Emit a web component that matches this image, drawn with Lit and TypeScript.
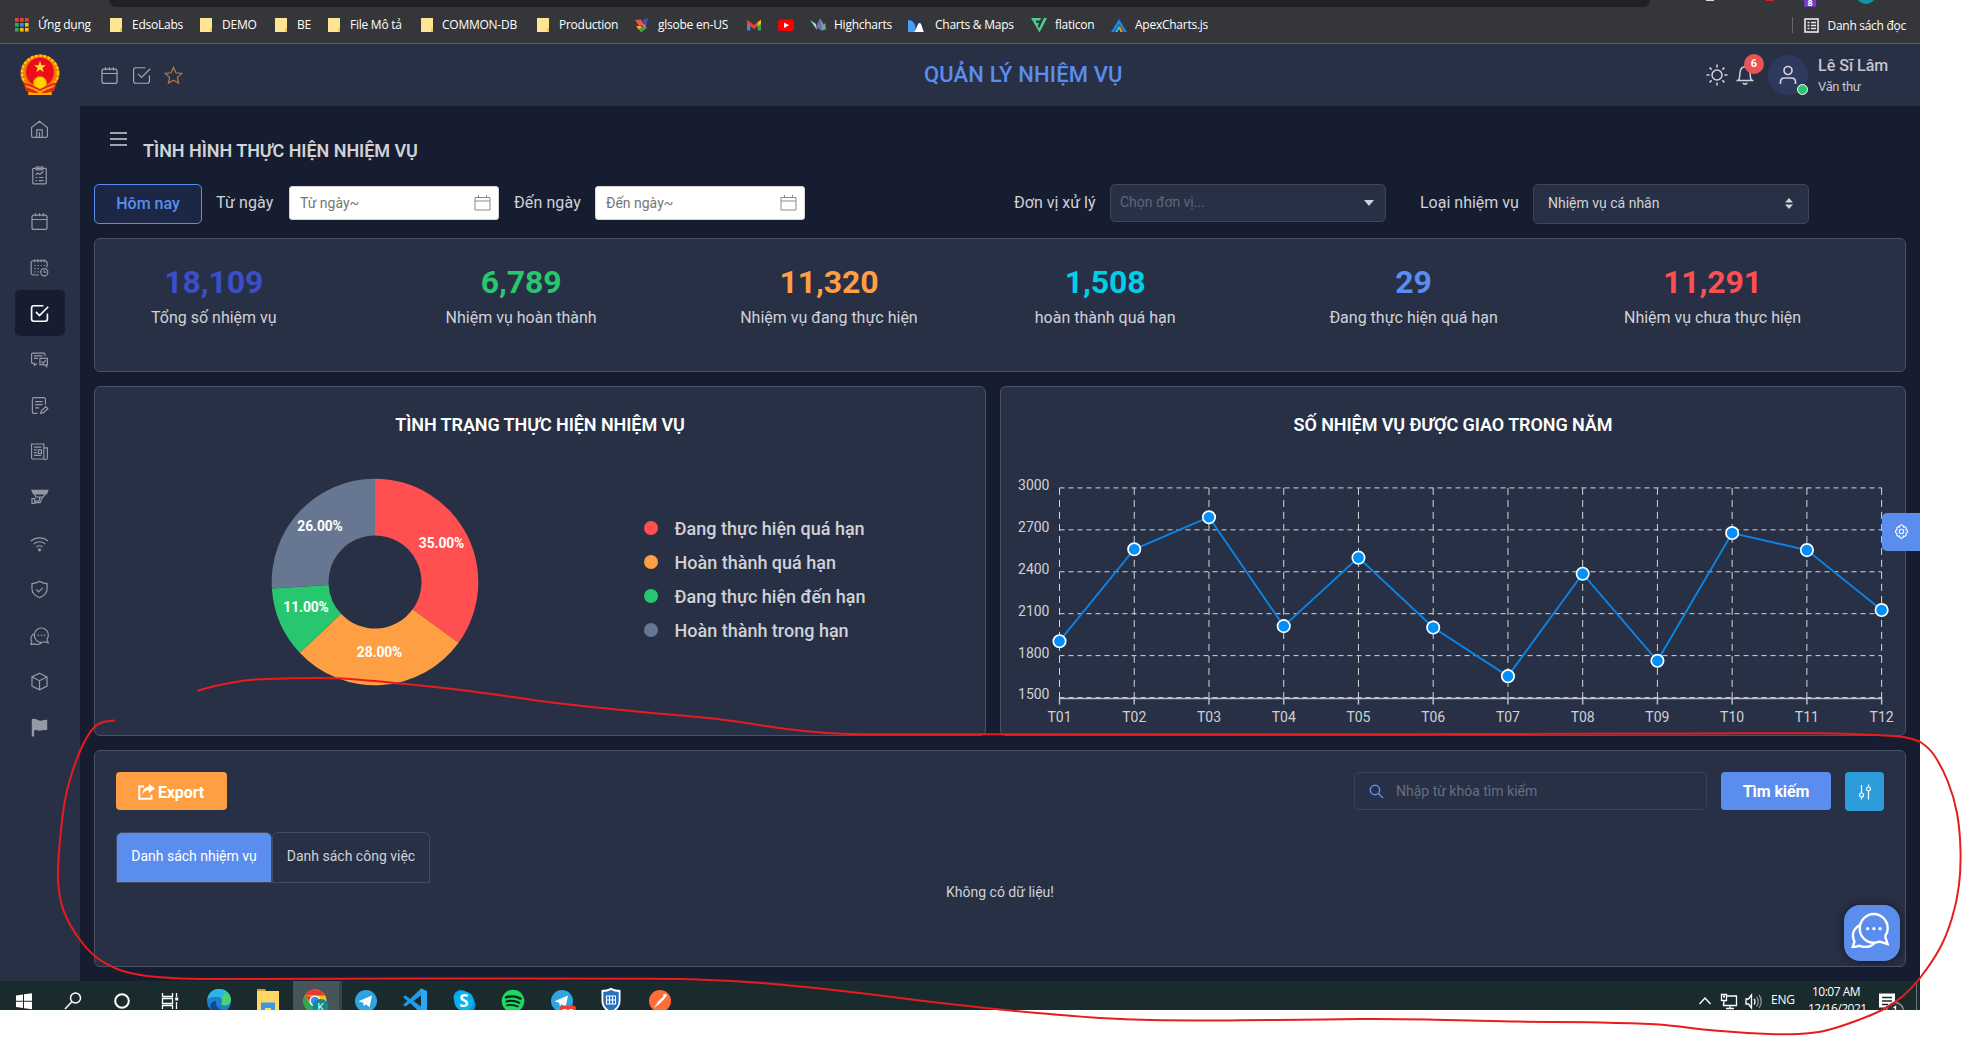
import { LitElement, html, css, svg, nothing, SVGTemplateResult } from "lit";
import { customElement } from "lit/decorators.js";
import { classMap } from "lit/directives/class-map.js";

type Glyph = SVGTemplateResult;

/* ---------- shared line icons on a 24 unit grid ---------- */
const calendar = svg`<rect x="2.5" y="4" width="19" height="18" rx="2.5"/><path d="M2.5 9.5h19M7 1.5v4M12 1.5v4M17 1.5v4"/>`;
const checkBox = svg`<path d="M22 12v7a2.8 2.8 0 0 1-2.800 2.800H4.800A2.800 2.800 0 0 1 2 19V5a2.800 2.800 0 0 1 2.800-2.800H17M7.500 10l4.500 4.500L23 3.500"/>`;
const star = svg`<path d="M12 1.800l3 6.800 7.400.8-5.500 5 1.500 7.300L12 18l-6.400 3.700 1.500-7.300-5.500-5 7.400-.8z"/>`;
const chat = svg`<path d="M21.500 16.500c1-1.300 1.700-3 1.700-4.800 0-5-3.900-9.200-8.800-9.200s-8.900 4.200-8.900 9.200 4 9 8.900 9c1.300 0 2.600-.3 3.700-.8l5 1.600-1.600-5"/><path d="M5.600 9.500C3 10.900 1.200 13.400 1.200 16.200c0 1.300.4 2.600 1 3.700L1 23.600l4.400-1c1.200.6 2.500.8 3.900.8 2.200 0 4-.9 5.400-2.300"/><path d="M10.500 11.800h.1M14.400 11.800h.1M18.300 11.800h.1" stroke-linecap="round" stroke-width="2"/>`;

const menu: { id: string; glyph: Glyph }[] = [
  { id: "home", glyph: svg`<path d="M2 9.500L12 1.500l10 8V20a2 2 0 0 1-2 2H4a2 2 0 0 1-2-2zM8.500 22V12.500h7V22M12 15v7"/>` },
  { id: "report", glyph: svg`<rect x="3.500" y="3" width="17" height="19.500" rx="1"/><rect x="8" y="1.200" width="8" height="3.600"/><path d="M7 11l3-2 2.500 1.500L17 7M7 14.500h2M7 18.500h2M11 14.500h6M11 18.500h6"/>` },
  { id: "calendar", glyph: calendar },
  { id: "schedule", glyph: svg`<path d="M11 21.500H4A2.500 2.500 0 0 1 1.500 19V6A2.500 2.500 0 0 1 4 3.500h15A2.500 2.500 0 0 1 21.500 6v6M6 1.500v4M10 1.500v4M14 1.500v4M18 1.500v4"/><circle cx="18" cy="18" r="4.500"/><path d="M18 15.500V18h2.500M5.500 9.500h1.500M9.500 9.500H11M13.500 9.500H15M5.500 13.500h1.500M9.500 13.500H11M5.500 17.500h1.500M9.500 17.500H11M17.500 9.500H19"/>` },
  { id: "tasks", glyph: checkBox },
  { id: "discussion", glyph: svg`<path d="M9 17l-3.500 2.500V17H3.500A1.500 1.500 0 0 1 2 15.500v-10A1.500 1.500 0 0 1 3.500 4h14A1.500 1.500 0 0 1 19 5.500V8M5 7.500h11M5 10.500h5"/><path d="M12.500 10.500h9.500v8h-1v2.500l-3-2.500h-5.500zM14.500 14.500l2 2 3.500-3.500"/>` },
  { id: "note", glyph: svg`<path d="M9.500 22H5a2 2 0 0 1-2-2V4a2 2 0 0 1 2-2h12.500a2 2 0 0 1 2 2v7M6.500 7h9.500M6.500 11h9.500M6.500 15h5M13.500 22l1-3.500 5.500-5 2.500 2.500-5.500 5z"/>` },
  { id: "news", glyph: svg`<path d="M2 2.500h15.500v19H3.500A1.500 1.500 0 0 1 2 20zM17.500 7.500H22v12.500a1.500 1.500 0 0 1-4.500 0M5 6.500h9.500M5 10h3.500M5 13.500h3.500M5 17h9.500M10.500 10h4v4.500h-4z"/>` },
  { id: "camera", glyph: svg`<path d="M2.500 3h20l-1.500 4.500H4.500zM6 7.500l1.500 4h9l3-4M12.500 11.500l-1 5H6.500M2.500 13.500v6h3.500v-6zM15.500 11.500l-2.500 7H6.500"/><path d="M4 4h17l-1 2.500H5z" fill="currentColor"/>` },
  { id: "wifi", glyph: svg`<path d="M1 9C7.500 3.500 16.500 3.500 23 9M4.500 12.800c4.500-3.900 10.500-3.900 15 0M8.200 16.500c2.300-2 5.300-2 7.600 0"/><circle cx="12" cy="20" r="1.200" fill="currentColor"/>` },
  { id: "shield", glyph: svg`<path d="M12 1.500c3 2 6 2.800 9.500 3v7C21.500 17 17 20.500 12 22.500 7 20.500 2.500 17 2.500 11.500v-7c3.500-.2 6.500-1 9.500-3zM8 12l3 3 5-5"/>` },
  { id: "chat", glyph: chat },
  { id: "box", glyph: svg`<path d="M12 1.500l9.500 4.700v11.600L12 22.500l-9.500-4.700V6.200zM2.500 6.200L12 11l9.500-4.800M12 11v11.500"/>` },
  { id: "flag", glyph: svg`<path d="M3 22.500V2c4-1.500 7 2.500 10.500 2.200 3-.2 5-1.500 7.500-1.200v11.500c-4.500-.8-7 1.500-10.500.5-2.500-.8-4.500-.5-6 .2v7.300z" fill="currentColor"/>` },
];

/* ---------- bookmark bar ---------- */
const folder = svg`<path d="M0 0h12v13h-1v1H0z" fill="#ffe591"/><path d="M10 10h2v4h-2z" fill="#f3c94c"/>`;
const bookmarks: { text?: string; width: number; pad: number; glyph: Glyph }[] = [
  { text: "Ứng dụng", width: 95, pad: 23, glyph: svg`${[0, 5, 10].map((y, r) => [0, 5, 10].map((x, c) => svg`<rect x=${x} y=${y} width="3.600" height="3.600" fill=${["#ea4335", "#ea4335", "#ea4335", "#34a853", "#4285f4", "#fbbc04", "#34a853", "#fbbc04", "#fbbc04"][r * 3 + c]}/>`))}` },
  { text: "EdsoLabs", width: 90, pad: 22, glyph: folder },
  { text: "DEMO", width: 75, pad: 22, glyph: folder },
  { text: "BE", width: 53, pad: 22, glyph: folder },
  { text: "File Mô tả", width: 93, pad: 22, glyph: folder },
  { text: "COMMON-DB", width: 116, pad: 21, glyph: folder },
  { text: "Production", width: 98, pad: 22, glyph: folder },
  { text: "glsobe en-US", width: 112, pad: 23, glyph: svg`<path d="M0 2l6-.5L9 7 4 8z" fill="#e2574c"/><path d="M8 2l5-2.500-1.500 7.500-3 .5z" fill="#3f51b5"/><path d="M1 8l5 0 2 3-4 1z" fill="#f6a623"/><path d="M4 11l7-3 1 2-6 4.500z" fill="#43a047"/><path d="M6 6l5 1-2 3z" fill="#ff7043"/>` },
  { width: 31, pad: 0, glyph: svg`<path d="M0 2.500v10h3.300V6.800z" fill="#4285f4"/><path d="M14 2.500v10h-3.300V6.800z" fill="#34a853"/><path d="M0 1.800L7 7l7-5.200v4L7 11 0 5.800z" fill="#ea4335"/><path d="M10.700 4.300L14 1.800v4l-3.300 2.500z" fill="#fbbc04"/>` },
  { width: 32, pad: 0, glyph: svg`<rect y="1.500" width="16" height="11.500" rx="3" fill="#f00"/><path d="M6 4.500v5.500l5-2.700z" fill="#fff"/>` },
  { text: "Highcharts", width: 98, pad: 24, glyph: svg`<path d="M0 2l6 4 1 6z" fill="#90e9b6"/><path d="M10 0l2 13-6-4z" fill="#6d6fa8"/><path d="M10 0l5.500 10-3.500 3z" fill="#8c8fc4"/><path d="M15 5l1 7-5-2z" fill="#5fb88c"/>` },
  { text: "Charts & Maps", width: 123, pad: 27, glyph: svg`<rect width="16" height="14" fill="#2c3650"/><path d="M0 2c6 0 8 5 8 12H0z" fill="#4a9df0"/><path d="M6 14C9 12 9 5 11.500 5S14 11 16 14z" fill="#fff"/>` },
  { text: "flaticon", width: 80, pad: 24, glyph: svg`<path d="M0 0h10L9 2.500H4.500L5.500 5H8L7 7.500h-.5L8 10.500 13 0h3L8.500 14.500z" fill="#4ad295"/>` },
  { text: "ApexCharts.js", width: 100, pad: 24, glyph: svg`<path d="M8 1L0 14h3l5-8 5 8h3z" fill="#1e88e5"/><path d="M8 7l-4 7h2.500L8 11z" fill="#26c6da"/><path d="M8.500 7.500L12 14H9.500L8 11z" fill="#ff9800"/>` },
];

/* ---------- statistics ---------- */
const stats = [
  { value: "18,109", label: "Tổng số nhiệm vụ", tone: "indigo" },
  { value: "6,789", label: "Nhiệm vụ hoàn thành", tone: "green" },
  { value: "11,320", label: "Nhiệm vụ đang thực hiện", tone: "orange" },
  { value: "1,508", label: "hoàn thành quá hạn", tone: "cyan" },
  { value: "29", label: "Đang thực hiện quá hạn", tone: "blue" },
  { value: "11,291", label: "Nhiệm vụ chưa thực hiện", tone: "red" },
];

const slices = [
  { share: 35, color: "#ff4f50", label: "Đang thực hiện quá hạn", x: 66.500, y: -39.500 },
  { share: 28, color: "#ff9f43", label: "Hoàn thành quá hạn", x: 4.500, y: 69.500 },
  { share: 11, color: "#28c76f", label: "Đang thực hiện đến hạn", x: -69, y: 24.500 },
  { share: 26, color: "#677792", label: "Hoàn thành trong hạn", x: -55, y: -56.500 },
];

/* ---------- monthly series ---------- */
const months = [1903, 2561, 2790, 2011, 2501, 2001, 1653, 2386, 1763, 2677, 2555, 2126];
const plot = { left: 1059.500, step: 74.740, top: 487.900, row: 41.930, right: 1881.700 };
const px = (i: number) => plot.left + plot.step * i;
const py = (v: number) => plot.top + ((3000 - v) / 300) * plot.row;

/* ---------- taskbar ---------- */
const telegram = svg`<circle cx="14" cy="14" r="11" fill="#2ca5e0"/><path d="M6.500 14.200L20 8.500l-2.400 11.700-3.800-2.900-2 2-.6-3.500z" fill="#fff"/>`;
const tasks: { glyph: Glyph; active?: boolean }[] = [
  { glyph: svg`<path d="M6 8.500l7-1v6.300H6zM14 7.300l8-1.100v7.600h-8zM6 14.700h7V21l-7-1zM14 14.700h8v7.600l-8-1.100z" fill="#fff"/>` },
  { glyph: svg`<g fill="none" stroke="#fff" stroke-width="1.500"><circle cx="16.500" cy="11" r="5"/><path d="M12.800 14.800L6 22"/></g>` },
  { glyph: svg`<circle cx="14" cy="14" r="6.800" fill="none" stroke="#fff" stroke-width="2"/>` },
  { glyph: svg`<g fill="none" stroke="#fff" stroke-width="1.300"><path d="M6.500 6v3.500h10V6M6.500 22v-3.500h10V22M6.500 11.500h10v5h-10zM20.500 6v4M20.500 15v7"/></g><path d="M19.200 10.500h3v3h-3z" fill="#fff"/>` },
  { glyph: svg`<circle cx="14" cy="14" r="12" fill="#1b7fd0"/><path d="M2.500 12C4 5 9 2 14 2c7 0 12 5 12 10.500 0 4-3 6-6 6s-4.500-1.500-3.500-3c1.500-2.500 0-6-4-6-5 0-8 1-10 2.500z" fill="#4bd07a"/><path d="M2.500 12C4 5 9 2 14 2c3 0 6 1 8 3-3 1-4 3-5.500 6.500-3-3-9-3.500-14 .5z" fill="#2bb6e8"/><path d="M11 14c-1 6 4 10.500 11 9-4 4-12 4-16-1-2-4 1-8 5-8z" fill="#0c4a94"/>` },
  { glyph: svg`<path d="M3 2h8l1.500 2.500H3z" fill="#d99a1c"/><path d="M3 4h22v22H3z" fill="#fdd663"/><path d="M7 26V15.500h14V26h-4v-5h-6v5z" fill="#3b97e3"/>` },
  { active: true, glyph: svg`<circle cx="14" cy="14" r="11.500" fill="#fbc116"/><path d="M4 8.200A11.500 11.500 0 0 1 24 8.500H14z" fill="#e33b2e"/><path d="M4 8.200A11.500 11.500 0 0 0 13 25.400l4-7.400-8.500-1.500z" fill="#2da94f"/><path d="M4 8.200L9.500 17l2-7z" fill="#e33b2e"/><circle cx="14" cy="14" r="5.600" fill="#fff"/><circle cx="14" cy="14" r="4.200" fill="#4285f4"/><circle cx="19.500" cy="20" r="8" fill="#0f8a90"/><text x="19.500" y="24" text-anchor="middle" class="mini">K</text>` },
  { glyph: telegram },
  { glyph: svg`<path d="M20 1.500l6 2.700v19.600l-6 2.700L9 16l-4.500 3.500-2.500-1.500L6.500 14 2 10l2.500-1.500L9 12z" fill="#1f9cf0"/><path d="M20 8.500L12.500 14l7.500 5.500z" fill="#1a2a2d"/><path d="M20 1.500l6 2.700v19.600l-6 2.700z" fill="#2aaaf5"/>` },
  { glyph: svg`<circle cx="11" cy="10.500" r="7.500" fill="#0aa5e6"/><circle cx="17.500" cy="18" r="8" fill="#0a8fd6"/><circle cx="14" cy="14" r="9.800" fill="#0ab0f0"/><text x="14" y="20" text-anchor="middle" class="skype">S</text>` },
  { glyph: svg`<circle cx="14" cy="14" r="11.300" fill="#1ed760"/><g fill="none" stroke="#12211a" stroke-linecap="round"><path d="M7 10.300c5-1.500 10.500-1 14.500 1.300" stroke-width="2.400"/><path d="M7.500 14.500c4.500-1.300 9-.8 12.800 1.300" stroke-width="2"/><path d="M8 18.300c4-1 7.500-.6 10.800 1.200" stroke-width="1.700"/></g>` },
  { glyph: svg`${telegram}<rect x="12" y="18.500" width="16" height="14" rx="3" fill="#f23c34"/><text x="20" y="30" text-anchor="middle" class="mini">32</text>` },
  { glyph: svg`<path d="M14 .8c3 1.700 6 2.200 9.500 2.200v11c0 6-4.500 10-9.500 12.500C9 24 4.500 20 4.500 14V3C8 3 11 2.500 14 .8z" fill="#fff"/><path d="M14 3c2.500 1.300 5 1.800 7.700 1.900V14c0 5-3.700 8.300-7.700 10.500C10 22.300 6.300 19 6.300 14V4.900C9 4.800 11.500 4.300 14 3z" fill="#2472c0"/><g stroke="#fff" stroke-width="1.100" fill="none"><path d="M9.500 9h9v8h-9zM9.500 13h9M12.500 9v8M15.500 9v8"/></g>` },
  { glyph: svg`<circle cx="14" cy="14" r="11" fill="#ff6c37"/><path d="M8 21l4.500-7 5.500-5 1.500 1.500-5 5.500z" fill="#fff"/><circle cx="19" cy="8.500" r="1.800" fill="#fff"/>` },
];

/* ---------- freehand annotation ---------- */
type Pt = [number, number];
const strokeA: Pt[] = [[198, 690.700], [215, 686], [249, 680], [290, 678.300], [336, 678.300], [400, 683.500], [465, 690.500], [556, 703], [639, 711.700], [717, 719], [791, 729.500], [837, 733.500], [900, 734.200], [1100, 734.200], [1400, 734.200], [1700, 733.500], [1819, 733.300], [1857, 734.200], [1890, 735.800], [1908, 738], [1921, 742.500], [1934, 755], [1948, 782], [1957, 813], [1960.500, 850], [1959, 885], [1952, 918], [1940, 948], [1920, 978], [1903, 996], [1882, 1010], [1853, 1022], [1824, 1031], [1798, 1034], [1769, 1034], [1714, 1030.500], [1659, 1024.500], [1600, 1022.500], [1511, 1021.500], [1427, 1019.500], [1370, 1019], [1300, 1019.800], [1230, 1020.400], [1150, 1020], [1100, 1018], [1050, 1014], [1000, 1009.500], [950, 1004], [900, 998], [850, 992], [800, 986.500], [740, 981.500], [680, 979], [640, 978.700], [419, 978.600], [200, 979], [160, 977.300], [135, 974], [116, 968.500], [96, 957], [82, 942.500], [70, 924.500], [62, 906], [58.300, 885], [58.500, 860], [61, 830], [65, 800], [71, 776], [80, 751], [88, 735.500], [95, 726.500], [103, 722], [114, 720.600]];

function smooth(points: Pt[]): string {
  let d = `M${points[0][0]} ${points[0][1]}`;
  for (let i = 0; i < points.length - 1; i++) {
    const [a, b, c, e] = [points[i - 1] ?? points[i], points[i], points[i + 1], points[i + 2] ?? points[i + 1]];
    const len = Math.hypot(c[0] - b[0], c[1] - b[1]);
    const unit = (p: Pt, q: Pt): Pt => {
      const l = Math.hypot(q[0] - p[0], q[1] - p[1]) || 1;
      return [((q[0] - p[0]) / l) * len / 3, ((q[1] - p[1]) / l) * len / 3];
    };
    const t1 = unit(a, c);
    const t2 = unit(b, e);
    d += `C${b[0] + t1[0]} ${b[1] + t1[1]} ${c[0] - t2[0]} ${c[1] - t2[1]} ${c[0]} ${c[1]}`;
  }
  return d;
}

@customElement("browser-bar")
class BrowserBar extends LitElement {
  static styles = css`
    :host { display: block; height: 44px; box-sizing: border-box; background: #35363a; border-bottom: 1px solid #5c5d61; font: 12px "Open Sans", "Noto Sans", sans-serif; color: #fff; overflow: hidden; }
    .top { display: flex; height: 7px; }
    .omnibox { margin-left: 109px; width: 1541px; background: #202124; border-radius: 0 0 12px 12px; flex: none; }
    .bits { flex: 1; }
    .bar { display: flex; padding: 8px 0 0 15px; height: 20px; align-items: center; }
    .item { display: flex; flex: none; align-items: center; white-space: nowrap; letter-spacing: -0.25px; line-height: 18px; margin-top: -1px; }
    .item svg { flex: none; overflow: visible; display: block; }
    .icon { flex: none; display: block; }
    .reading { margin-left: auto; padding: 0 14px 0 11px; border-left: 1px solid #66676b; display: flex; align-items: center; gap: 8px; height: 16px; letter-spacing: -0.28px; white-space: nowrap; }
  `;
  render() {
    return html`
      <div class="top">
        <div class="omnibox"></div>
        <svg class="bits" height="7" viewBox="1650 0 270 7">
          <path d="M1706 0h8v1h-8z" fill="#ddd"/><path d="M1766 0h8v1h-8z" fill="#e02020"/>
          <rect x="1804" y="-6" width="12" height="13" rx="1.500" fill="#6f3fc0"/>
          <text x="1810" y="6" text-anchor="middle" font-size="9" font-weight="700" fill="#fff">8</text>
          <circle cx="1866" cy="-6" r="10" fill="#0f96a5"/>
        </svg>
      </div>
      <div class="bar">
        ${bookmarks.map((b) => html`<div class="item" style="width:${b.width}px">
          <span class="icon" style="width:${b.pad || 16}px"><svg width="16" height="14" viewBox="0 0 16 14">${b.glyph}</svg></span>${b.text ?? nothing}</div>`)}
        <div class="reading">
          <svg width="15" height="15" viewBox="0 0 15 15" fill="none" stroke="#e8eaed"><rect x="1" y="1" width="13" height="13" stroke-width="1.600"/><path d="M3.500 4.500h2M3.500 7.500h2M3.500 10.500h2M7 4.500h5M7 7.500h5M7 10.500h5" stroke-width="1.600"/></svg>
          Danh sách đọc
        </div>
      </div>`;
  }
}

@customElement("side-menu")
class SideMenu extends LitElement {
  static styles = css`
    :host { display: flex; flex-direction: column; align-items: center; width: 80px; background: #283046; color: #959aa6; flex: none; }
    .logo { margin: 10px 0 10px; display: block; }
    .entry { width: 50px; height: 46px; display: flex; align-items: center; justify-content: center; border-radius: 5px; padding-right: 2px; box-sizing: border-box; flex: none; }
    .entry.active { background: #161d31; color: #fff; }
    .entry svg { fill: none; stroke: currentColor; stroke-width: 1.500; display: block; }
    .entry.active svg { stroke-width: 2.100; }
  `;
  render() {
    return html`
      <svg class="logo" width="42" height="42" viewBox="0 0 42 42">
        <path d="M10 30l-1 11h24l-1-11z" fill="#f5a400"/>
        <ellipse cx="21" cy="19" rx="19.500" ry="18.500" fill="#f07c00"/>
        <ellipse cx="21" cy="19" rx="18" ry="17.200" fill="none" stroke="#ffc61a" stroke-width="2.500" stroke-dasharray="2.500 1.800"/>
        <ellipse cx="21" cy="18" rx="14" ry="14.500" fill="#ec0c1c"/>
        <path d="M21 7l1.500 4.200h4.500l-3.600 2.700 1.300 4.300-3.700-2.600-3.700 2.600 1.300-4.300-3.600-2.700h4.500z" fill="#ffe22a"/>
        <circle cx="21" cy="29" r="6.500" fill="#ffd400" stroke="#f07c00" stroke-width="1.200" stroke-dasharray="2 1"/>
        <path d="M4 28l9 3 8 4 8-4 9-3-3 9-7 3-7-2-7 2-7-3z" fill="#e8281c"/>
        <path d="M7 32l8 3 6 3 6-3 8-3" fill="none" stroke="#ffb400" stroke-width="1.600"/>
        <path d="M10 38l11 2 11-2v3H10z" fill="#ffae00"/>
      </svg>
      ${menu.map((m) => html`<div class=${classMap({ entry: true, active: m.id === "tasks" })}>
        <svg width="19" height="19" viewBox="0 0 24 24">${m.glyph}</svg></div>`)}`;
  }
}

@customElement("page-header")
class PageHeader extends LitElement {
  static styles = css`
    :host { display: flex; height: 62px; background: #283046; align-items: center; color: #d0d2d6; flex: none; }
    svg { fill: none; stroke: currentColor; display: block; overflow: visible; }
    .shortcuts { display: flex; gap: 13px; margin: 1px 0 0 20px; color: #a3a8b3; stroke-width: 1.500; }
    .star { color: #c0783c; }
    .title { margin: 0 0 1px 741px; width: 206px; font-size: 22px; font-weight: 500; color: #5a8dee; white-space: nowrap; letter-spacing: 0.15px; }
    .tools { display: flex; align-items: center; margin-left: auto; padding-right: 31px; }
    .bell { position: relative; margin: 0 14px 0 8px; }
    .count { position: absolute; left: 8px; top: -11px; width: 20px; height: 20px; border-radius: 50%; background: #ea5455; color: #fff; font-size: 11px; line-height: 20px; font-weight: 700; text-align: center; }
    .avatar { position: relative; width: 40px; height: 40px; border-radius: 50%; background: #2d3a5d; display: flex; align-items: center; justify-content: center; }
    .dot { position: absolute; right: 0; bottom: 0; width: 9px; height: 9px; border-radius: 50%; background: #28c76f; border: 1px solid #fff; }
    .who { margin-left: 10px; width: 71px; white-space: nowrap; color: #c3c6cc; }
    .name { font-size: 16px; font-weight: 500; line-height: 20px; margin-top: 0; }
    .role { font-size: 13px; line-height: 16px; margin-top: 3px; letter-spacing: -0.35px; }
  `;
  render() {
    return html`
      <div class="shortcuts">
        <svg width="19" height="19" viewBox="0 0 24 24">${calendar}</svg>
        <svg width="19" height="19" viewBox="0 0 24 24">${checkBox}</svg>
        <svg class="star" width="19" height="19" viewBox="0 0 24 24">${star}</svg>
      </div>
      <div class="title">QUẢN LÝ NHIỆM VỤ</div>
      <div class="tools">
        <svg width="22" height="22" viewBox="0 0 22 22" stroke-width="1.500"><circle cx="11" cy="11" r="5"/><path d="M11 .5v3M11 18.500v3M.5 11h3M18.500 11h3M3.600 3.600l2 2M16.400 16.400l2 2M3.600 18.400l2-2M16.400 5.600l2-2"/></svg>
        <div class="bell">
          <svg width="18" height="20" viewBox="0 0 18 20" stroke-width="1.500"><path d="M.5 15.500h17M2.500 15.500c1.500-2 1-4 1.500-8C4.500 4 6.500 1.800 9 1.800s4.500 2.200 5 5.700c.5 4 0 6 1.500 8M6.800 18c1 1.500 3.400 1.500 4.400 0"/></svg>
          <span class="count">6</span>
        </div>
        <div class="avatar">
          <svg width="18" height="20" viewBox="0 0 18 20" stroke-width="1.700"><circle cx="9" cy="5.500" r="4"/><path d="M1.500 19v-2c0-2.500 1.500-4 4-4h7c2.500 0 4 1.500 4 4v2"/></svg>
          <span class="dot"></span>
        </div>
        <div class="who"><div class="name">Lê Sĩ Lâm</div><div class="role">Văn thư</div></div>
      </div>`;
  }
}

@customElement("status-donut")
class StatusDonut extends LitElement {
  static styles = css`
    :host { display: flex; padding-left: 174.500px; }
    .ring { margin-top: 40px; flex: none; }
    .share { font-size: 13.800px; font-weight: 700; fill: #fff; text-anchor: middle; letter-spacing: -0.1px; }
    .legend { margin: 74px 0 0 164px; display: flex; flex-direction: column; }
    .row { display: flex; align-items: center; height: 34px; gap: 17px; font-size: 18px; font-weight: 500; color: #d0d2d6; white-space: nowrap; }
  `;
  private arc(from: number, to: number) {
    const at = (t: number, r: number) => `${Math.sin(t * 2 * Math.PI) * r} ${-Math.cos(t * 2 * Math.PI) * r}`;
    const R = 103.3, r = 46.5, large = to - from > 0.5 ? 1 : 0;
    return `M${at(from, R)}A${R} ${R} 0 ${large} 1 ${at(to, R)}L${at(to, r)}A${r} ${r} 0 ${large} 0 ${at(from, r)}Z`;
  }
  render() {
    let sum = 0;
    return html`
      <svg class="ring" width="210" height="210" viewBox="-105 -105 210 210">
        ${slices.map((s) => {
          const from = sum / 100;
          sum += s.share;
          return svg`<path d=${this.arc(from, sum / 100)} fill=${s.color}/>`;
        })}
        ${slices.map((s) => svg`<text class="share" x=${s.x} y=${s.y + 5}>${s.share.toFixed(2)}%</text>`)}
      </svg>
      <div class="legend">
        ${slices.map((s) => html`<div class="row"><svg width="14" height="14" viewBox="0 0 14 14"><circle cx="7" cy="7" r="7" fill=${s.color}/></svg>${s.label}</div>`)}
      </div>`;
  }
}

@customElement("yearly-chart")
class YearlyChart extends LitElement {
  static styles = css`
    :host { display: block; }
    svg { display: block; }
    text { font-size: 14px; fill: #cfd1d5; }
    .y { text-anchor: end; }
    .x { text-anchor: middle; }
    .grid { stroke: #d4d6da; stroke-width: 1; stroke-dasharray: 5 4; }
    .v { stroke-dasharray: 7 5; }
    .axis { stroke: #b9bcc2; stroke-width: 1.500; }
  `;
  render() {
    const bottom = py(1500);
    return html`<svg width="904" height="298" viewBox="1001 437 904 298">
      ${[3000, 2700, 2400, 2100, 1800, 1500].map((v) => svg`
        <line class="grid" x1=${plot.left} x2=${plot.right} y1=${py(v)} y2=${py(v)}/>
        <text class="y" x="1049.500" y=${py(v) + 1.9}>${v}</text>`)}
      ${months.map((_, i) => svg`
        <line class="grid v" x1=${px(i)} x2=${px(i)} y1=${plot.top} y2=${bottom}/>
        <line class="axis" x1=${px(i)} x2=${px(i)} y1=${bottom} y2=${bottom + 7} stroke-width="1"/>
        <text class="x" x=${px(i)} y="722">T${String(i + 1).padStart(2, "0")}</text>`)}
      <line class="axis" x1=${plot.left} x2=${plot.right} y1=${bottom + 1} y2=${bottom + 1}/>
      <polyline points=${months.map((v, i) => `${px(i)},${py(v)}`).join(" ")} fill="none" stroke="#0a84e6" stroke-width="1.900"/>
      ${months.map((v, i) => svg`<circle cx=${px(i)} cy=${py(v)} r="6.200" fill="#008ffb" stroke="#fff" stroke-width="1.700"/>`)}
    </svg>`;
  }
}

@customElement("task-bar")
class TaskBar extends LitElement {
  static styles = css`
    :host { display: flex; height: 29px; background: #1a2b2e; overflow: hidden; color: #fff; font-family: "Open Sans", "Noto Sans", sans-serif; flex: none; }
    .apps { display: grid; grid-auto-flow: column; grid-auto-columns: 48.930px; height: 29px; }
    .app { display: flex; justify-content: center; padding: 6px 1.500px 0 0; height: 23px; }
    .app svg { flex: none; display: block; overflow: visible; }
    .active { background: #47555a; box-shadow: 3px 0 0 #394649; margin: 0 3px 0 -1px; }
    .mini { font: 11px "Open Sans", sans-serif; fill: #fff; }
    .skype { font: 700 17px "Open Sans", sans-serif; fill: #fff; }
    .tray { display: flex; margin-left: auto; font-size: 12px; }
    .tray svg { display: block; fill: none; stroke: #fff; stroke-width: 1.300; }
    .signs { margin-right: 9px; }
    .lang { width: 37px; line-height: 16px; padding-top: 11px; letter-spacing: -0.2px; }
    .clock { width: 56px; text-align: center; line-height: 17px; padding-top: 2px; letter-spacing: -0.5px; white-space: nowrap; }
    .notice { margin-left: 13px; }
  `;
  render() {
    return html`
      <div class="apps">${tasks.map((t) => html`<div class=${classMap({ app: true, active: !!t.active })}><svg width="28" height="28" viewBox="0 0 28 28">${t.glyph}</svg></div>`)}</div>
      <div class="tray">
        <svg class="signs" width="64" height="29" viewBox="1700 981 64 29">
          <path d="M1701.500 1004l5.500-6 5.500 6"/>
          <path d="M1729 996h9.500v9.500h-13V1003M1732 1005.500v3M1728 1008.500h8"/><path d="M1723.500 994.500h5v6h-5zM1726 1000.500v3" /><path d="M1725 996.500h2" stroke-width="2"/>
          <path d="M1748 999h2.500l3-4v13l-3-4h-2.500z"/><path d="M1756 999c1.300 1.300 1.300 4 0 5.500"/><path d="M1758.500 997c2.300 2.500 2.300 7 0 9.500M1761 995c3 4 3 9.500 0 13" stroke="#8b9496"/>
        </svg>
        <span class="lang">ENG</span>
        <div class="clock">10:07 AM<br>12/16/2021</div>
        <svg class="notice" width="43" height="29" viewBox="1877 981 43 29">
          <path d="M1879 993.500h16v14h-5l-4 4v-4h-7z" fill="#fff" stroke="none"/><path d="M1882 997.500h10M1882 1001h10M1882 1004.500h6" stroke="#1a2b2e"/>
          <circle cx="1895" cy="1011" r="8.500" fill="#2b3336" stroke="#9aa0a2"/><path d="M1893.500 1008l2-1.500v5" />
          <path d="M1916.500 981v29" stroke="#6e797b" stroke-width="1"/>
        </svg>
      </div>`;
  }
}

@customElement("app-root")
class AppRoot extends LitElement {
  static styles = css`
    :host { display: block; position: relative; width: 1962px; height: 1037px; background: #fff; overflow: hidden; font-family: Roboto, "Liberation Sans", sans-serif; }
    .desktop { width: 1920px; height: 1010px; display: flex; flex-direction: column; overflow: hidden; position: relative; }
    .app { display: flex; flex: 1; min-height: 0; background: #161d31; }
    .main { flex: 1; min-width: 0; display: flex; flex-direction: column; }
    .content { padding: 0 14px; display: flex; flex-direction: column; color: #d0d2d6; }
    .heading { display: flex; height: 78px; }
    .burger { margin: 26px 0 0 16px; flex: none; }
    .heading h2 { margin: 33px 0 0 16px; font-size: 18px; line-height: 24px; font-weight: 600; letter-spacing: -0.05px; white-space: nowrap; color: #d0d2d6; }
    .filters { display: flex; height: 40px; align-items: flex-start; font-size: 16px; white-space: nowrap; }
    .today { box-sizing: border-box; width: 108px; height: 40px; border: 1px solid #5a8dee; border-radius: 5px; background: #1b2745; color: #5a8dee; font-weight: 500; line-height: 38px; text-align: center; margin-right: 14px; }
    .label { line-height: 38px; letter-spacing: 0.1px; }
    .from { width: 73px; }
    .to { width: 81px; margin-left: 15px; }
    .unit { width: 96px; margin-left: 209px; letter-spacing: 0; }
    .kind { width: 113px; margin-left: 34px; letter-spacing: 0; }
    .date { box-sizing: border-box; width: 210px; height: 34px; margin-top: 2px; background: #fff; border: 1px solid #d5d5d5; border-radius: 3px; padding: 0 7px 0 10px; display: flex; justify-content: space-between; align-items: center; font-size: 14px; color: #757575; }
    .select { box-sizing: border-box; width: 276px; border: 1px solid #404656; border-radius: 5px; background: #283046; display: flex; justify-content: space-between; align-items: center; font-size: 14px; }
    .unit-select { height: 38px; padding: 0 11px 3px 9px; color: #5d677b; }
    .unit-select svg { margin-top: 3px; }
    .kind-select { height: 40px; padding: 0 15px 2px 14px; }
    .card { box-sizing: border-box; background: #283046; border: 1px solid #4b5265; border-radius: 6px; }
    .stats { margin-top: 14px; height: 134px; display: grid; grid-template-columns: repeat(5, 294.600px) 1fr; padding: 24px 0 0 56px; }
    .stat { justify-self: start; text-align: center; white-space: nowrap; }
    .value { font-size: 32px; line-height: 38px; font-weight: 700; letter-spacing: -0.1px; }
    .caption { font-size: 16px; line-height: 24px; margin-top: 5px; }
    .indigo { color: #3b4fc9; } .green { color: #28c76f; } .orange { color: #ff9f43; }
    .cyan { color: #00cfe8; } .blue { color: #5a8dee; } .red { color: #ff4f50; }
    .charts { display: grid; grid-template-columns: 892px 906px; gap: 14px; margin-top: 14px; }
    .chart { height: 350px; }
    .chart h3 { margin: 26px 0 0; text-align: center; font-size: 18px; line-height: 24px; font-weight: 600; letter-spacing: -0.08px; color: #fff; }
    .list { margin-top: 14px; height: 217px; padding: 21px 21px 0; }
    .actions { display: flex; height: 39px; align-items: flex-start; }
    .btn { height: 38px; border-radius: 4px; color: #fff; font-size: 16px; font-weight: 700; display: flex; align-items: center; justify-content: center; letter-spacing: -0.1px; }
    .export { box-sizing: border-box; padding: 2px 1px 0 0; width: 111px; background: #ff9f43; gap: 3px; }
    .search { box-sizing: border-box; width: 353px; height: 38px; margin-left: auto; border: 1px solid #3b4358; border-radius: 5px; display: flex; align-items: center; gap: 12px; padding-left: 14px; font-size: 14px; color: #676e80; }
    .find { width: 110px; margin-left: 14px; background: #5a8dee; }
    .tune { width: 39px; height: 39px; margin-left: 14px; background: #2d9cdb; }
    .tabs { display: flex; margin-top: 21px; font-size: 14px; line-height: 47px; text-align: center; white-space: nowrap; }
    .tab { box-sizing: border-box; height: 51px; width: 158px; border: 1px solid #434b60; border-radius: 6px 6px 0 0; }
    .tab.on { width: 156px; background: #5a8dee; color: #fff; }
    .empty { text-align: center; font-size: 14px; line-height: 20px; margin-top: -1px; }
    .settings { position: absolute; left: 1882px; top: 513px; width: 38px; height: 37px; padding-bottom: 1px; background: #5a8dee; border-radius: 5px 0 0 5px; display: flex; align-items: center; justify-content: center; }
    .fab { position: absolute; left: 1844px; top: 905px; width: 56px; height: 56px; border-radius: 16px; background: #5a8dee; box-shadow: 0 1px 10px rgba(0, 0, 0, 0.5); color: #fff; }
    .fab svg { display: block; margin: 5px 0 0 7px; }
    .ink { position: absolute; left: 0; top: 0; }
  `;

  render() {
    const cal = html`<svg width="17" height="16" viewBox="0 0 17 16" fill="none" stroke="#8b8b8b"><path d="M1 2.500h15v12.500H1zM1 6h15M4.500 0v3M12.500 0v3"/></svg>`;
    return html`
      <div class="desktop">
        <browser-bar></browser-bar>
        <div class="app">
          <side-menu></side-menu>
          <div class="main">
            <page-header></page-header>
            <div class="content">
              <div class="heading">
                <svg class="burger" width="17" height="14" viewBox="0 0 17 14" stroke="#d0d2d6" stroke-width="1.400"><path d="M0 1h18M0 7h18M0 13h18"/></svg>
                <h2>TÌNH HÌNH THỰC HIỆN NHIỆM VỤ</h2>
              </div>
              <div class="filters">
                <div class="today">Hôm nay</div>
                <div class="label from">Từ ngày</div><div class="date">Từ ngày~ ${cal}</div>
                <div class="label to">Đến ngày</div><div class="date">Đến ngày~ ${cal}</div>
                <div class="label unit">Đơn vị xử lý</div>
                <div class="select unit-select">Chọn đơn vị... <svg width="10" height="6" viewBox="0 0 10 6"><path d="M0 0h10L5 6z" fill="#d0d2d6"/></svg></div>
                <div class="label kind">Loại nhiệm vụ</div>
                <div class="select kind-select">Nhiệm vụ cá nhân <svg width="8" height="11" viewBox="0 0 8 11"><path d="M0 4.500h8L4 0zM0 6.500h8L4 11z" fill="#d0d2d6"/></svg></div>
              </div>
              <div class="card stats">
                ${stats.map((s) => html`<div class="stat"><div class="value ${s.tone}">${s.value}</div><div class="caption">${s.label}</div></div>`)}
              </div>
              <div class="charts">
                <div class="card chart"><h3>TÌNH TRẠNG THỰC HIỆN NHIỆM VỤ</h3><status-donut></status-donut></div>
                <div class="card chart"><h3>SỐ NHIỆM VỤ ĐƯỢC GIAO TRONG NĂM</h3><yearly-chart></yearly-chart></div>
              </div>
              <div class="card list">
                <div class="actions">
                  <div class="btn export"><svg width="17" height="16" viewBox="0 0 17 16"><path d="M6 2.500H1.200v12.300h12.300v-4" fill="none" stroke="#fff" stroke-width="1.900"/><path d="M11 0l6 4.500L11 9V6.200C8 6.200 6 7.500 4.500 10.500 4.500 6 7 3 11 2.800z" fill="#fff"/></svg>Export</div>
                  <div class="search"><svg width="15" height="15" viewBox="0 0 15 15" fill="none" stroke="#5a8dee" stroke-width="1.500"><circle cx="6" cy="6" r="4.700"/><path d="M9.500 9.500l4.500 4.500"/></svg>Nhập từ khóa tìm kiếm</div>
                  <div class="btn find">Tìm kiếm</div>
                  <div class="btn tune"><svg width="14" height="16" viewBox="0 0 14 16" fill="none" stroke="#fff" stroke-width="1.200"><path d="M3.500 1v8M3.500 13v2.500M10.500 7v8.500M10.500 .5v2"/><circle cx="3.500" cy="11" r="2"/><circle cx="10.500" cy="5" r="2"/></svg></div>
                </div>
                <div class="tabs"><div class="tab on">Danh sách nhiệm vụ</div><div class="tab">Danh sách công việc</div></div>
                <div class="empty">Không có dữ liệu!</div>
              </div>
            </div>
          </div>
        </div>
        <task-bar></task-bar>
        <div class="settings"><svg width="15" height="15" viewBox="0 0 24 24" fill="none" stroke="#fff" stroke-width="1.700"><circle cx="12" cy="12" r="3.500"/><path d="M12 1l2.500 1.500.6 2.300 2.200-.6 2.500 2.500-.8 2.500L21.500 10.500v3L19 15l.8 2.500-2.500 2.500-2.300-.8-.5 2.500L12 23l-2.500-1.300-.5-2.500-2.300.8-2.500-2.500L5 15l-2.500-1.500v-3L5 9.200l-.8-2.500 2.500-2.500 2.200.6.600-2.300z"/></svg></div>
        <div class="fab"><svg width="38" height="38" viewBox="0 0 24 24" fill="none" stroke="currentColor" stroke-width="1.500">${chat}</svg></div>
      </div>
      <svg class="ink" width="1962" height="1037" viewBox="0 0 1962 1037"><path d=${smooth(strokeA)} fill="none" stroke="#e81c1c" stroke-width="2" stroke-linecap="round"/></svg>`;
  }
}
